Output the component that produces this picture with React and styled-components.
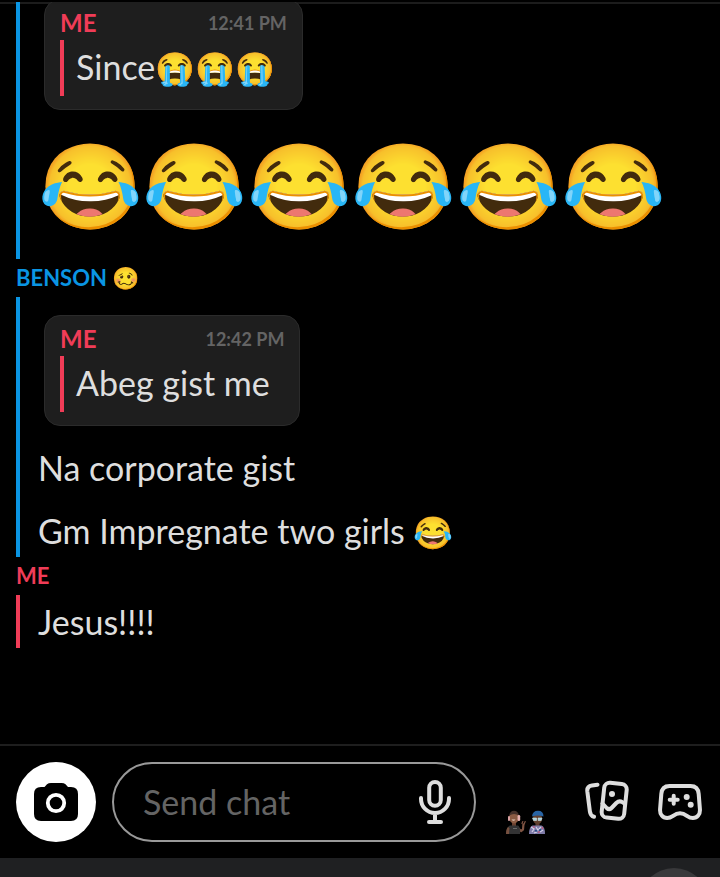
import React from 'react';
import styled, { createGlobalStyle } from 'styled-components';

const BLUE = '#0a95e3';
const RED = '#f03c57';

const GlobalStyle = createGlobalStyle`
  * { box-sizing: border-box; }
  body {
    margin: 0;
    background: #000;
    color: #dedede;
    font-family: Lato, "Noto Color Emoji", sans-serif;
  }
  button { padding: 0; border: 0; background: none; color: inherit; font: inherit; cursor: pointer; }
`;

const Screen = styled.div`
  display: flex;
  flex-direction: column;
  height: 100vh;
  padding-top: 2px;
`;

const Thread = styled.main`
  flex: 1;
  min-height: 0;
  display: flex;
  flex-direction: column;
  padding: 0 16px;
  overflow: hidden;
  box-shadow: inset 0 2px #1c1c1c;
`;

const Sender = styled.h2`
  margin: 0;
  height: 38px;
  line-height: 38px;
  font-size: 22px;
  font-weight: 700;
  white-space: pre;
  color: ${(p) => p.$color};
`;

const Group = styled.section`
  display: flex;
  flex-direction: column;
  align-items: flex-start;
  gap: 10px;
  padding-left: 18px;
  border-left: 4px solid ${(p) => p.$color};
`;

const Message = styled.p`
  margin: 0;
  font-size: 34px;
  line-height: 53px;
`;

const Emoji = styled.span`
  font-size: 32px;
  line-height: 1;
`;

const BigEmoji = styled.p`
  margin: 0;
  padding: 6px 0 22px;
  font-size: 84px;
  line-height: 106px;
  white-space: nowrap;
`;

const QuoteCard = styled.article`
  display: flex;
  flex-direction: column;
  margin: ${(p) => (p.$first ? '-3px' : '18px')} 0 5px 6px;
  padding: 0 15px 13px;
  border: 1px solid #2b2b2b;
  border-radius: 16px;
  background: #1e1e1e;
`;

const QuoteHead = styled.header`
  display: flex;
  align-items: center;
  justify-content: space-between;
  gap: 109px;
  height: 40px;
  padding-top: 6px;
`;

const QuoteName = styled.strong`
  color: ${RED};
  font-size: 24px;
  line-height: 24px;
`;

const QuoteTime = styled.time`
  color: #646464;
  font-size: 18px;
  font-weight: 700;
  line-height: 24px;
`;

const QuoteText = styled.p`
  margin: 0;
  padding: 0 12px 2px;
  border-left: 4px solid ${RED};
  font-size: 34px;
  line-height: 54px;
`;

const Composer = styled.form`
  display: flex;
  align-items: center;
  padding: 16px 18px 16px 16px;
  border-top: 2px solid #1e1e1e;
`;

const CameraButton = styled.button`
  display: grid;
  place-items: center;
  flex: none;
  width: 80px;
  height: 80px;
  border-radius: 50%;
  background: #fff;
`;

const Field = styled.div`
  flex: 1;
  min-width: 0;
  display: flex;
  align-items: center;
  height: 80px;
  margin: 0 30px 0 16px;
  padding: 0 17px 0 29px;
  border: 2px solid #999;
  border-radius: 40px;
`;

const ChatInput = styled.input`
  flex: 1;
  min-width: 0;
  padding: 0;
  border: 0;
  outline: 0;
  background: none;
  color: #dedede;
  font: 34px/48px Lato, sans-serif;
  &::placeholder { color: #646464; opacity: 1; }
`;

const Tools = styled.div`
  display: flex;
  align-items: center;
  gap: 29px;
`;

const IconButton = styled.button`
  display: flex;
  flex: none;
  align-items: center;
`;

const AvatarButton = styled(IconButton)`
  align-items: flex-end;
  width: 50px;
  height: 64px;
`;

const SystemBar = styled.footer`
  display: flex;
  justify-content: flex-end;
  height: 19px;
  padding: 10px 11px 0;
  overflow: hidden;
  background: #1f2022;
`;

const Knob = styled.span`
  flex: none;
  width: 70px;
  height: 70px;
  border-radius: 50%;
  background: #39393b;
`;

const stroke = { fill: 'none', stroke: '#dedede', strokeWidth: 4, strokeLinecap: 'round', strokeLinejoin: 'round' };

const CameraIcon = () => (
  <svg width="44" height="40" viewBox="0 0 44 40" aria-hidden="true">
    <path d="M7 5h3.5L13 2.200Q14.500 1 17 1h10.500q2.500 0 4 1.200L34 5h3q7 0 7 7v20q0 7-7 7H7q-7 0-7-7V12q0-7 7-7Z" fill="#000" />
    <circle cx="22" cy="21" r="8.200" fill="none" stroke="#fff" strokeWidth="3.800" />
  </svg>
);

const MicIcon = () => (
  <svg width="44" height="48" viewBox="0 0 44 48" aria-hidden="true">
    <g {...stroke}>
      <rect x="16.200" y="3.900" width="11.600" height="23.900" rx="5.800" />
      <path d="M8 20v1a14 14 0 0 0 28 0v-1M22 35v9M16 44h12" />
    </g>
  </svg>
);

const CardsIcon = () => (
  <svg width="44" height="44" viewBox="0 0 44 44" aria-hidden="true">
    <g {...stroke}>
      <path d="M12.500 4.700 7 5.400Q1.800 6.200 2.300 11.200L4.900 31.500Q5.500 36 9 36.800" />
      <rect x="17.900" y="3.300" width="22.600" height="35" rx="5.500" transform="rotate(6 29.200 20.800)" />
      <path d="m17.500 23.500 4.200 4.500q2.400 2.400 4.800 0l4.800-5q3-2.800 6-.8l1.500 1" />
    </g>
    <circle cx="27" cy="14" r="3" fill="#dedede" />
  </svg>
);

const GamepadIcon = () => (
  <svg width="44" height="44" viewBox="0 0 44 44" aria-hidden="true">
    <g {...stroke}>
      <path d="M11.500 6h21c5 0 7.800 3 8.200 8l1.200 15c.5 5.500-2.700 9-7 9-2.300 0-4-.8-6-2.200-2.500-1.800-4.400-2.500-6.900-2.500s-4.400.7-6.900 2.500c-2 1.400-3.700 2.200-6 2.200-4.300 0-7.500-3.500-7-9L3.300 14C3.700 9 6.500 6 11.500 6Z" />
      <path d="M15.700 15.700v8M11.700 19.700h8" />
    </g>
    <circle cx="28.700" cy="17" r="3" fill="#dedede" />
    <circle cx="32.700" cy="24.700" r="3" fill="#dedede" />
  </svg>
);

const FriendsIcon = () => (
  <svg width="40" height="24" viewBox="0 0 40 24" aria-hidden="true">
    <path d="M12 18l3 3 2-1.500.5-6" fill="none" stroke="#805544" strokeWidth="2.200" strokeLinejoin="round" />
    <path d="M16 13.500l.8-2M18.200 14l1-2.500" stroke="#805544" strokeWidth="1.200" strokeLinecap="round" />
    <path d="M6 12h4v5H6z" fill="#69402f" />
    <path d="M0 24q.5-7.500 4-8.500h8q2.500 1.500 2 8.500Z" fill="#333334" />
    <path d="M0 24q0-5 2-7l1.500 1-.5 6Z" fill="#76503f" />
    <ellipse cx="8" cy="7.500" rx="4.800" ry="6" fill="#8b5b43" />
    <path d="M3.200 5.500Q4 .8 8 .8t5 4.700Q8 2.500 3.200 5.500Z" fill="#443029" />
    <rect x="2" y="6" width="2" height="5" rx="1" fill="#d9a1a0" />
    <rect x="11.600" y="5" width="2.600" height="6" rx="1.300" fill="#e7b2b1" />
    <path d="M5.500 9.500h4q-2 2.500-4 0" fill="#e7cfc0" />
    <path d="M7 18.500h4" stroke="#777" strokeWidth=".8" />
    <path d="M29.500 12h4v5h-4z" fill="#5b3a30" />
    <path d="M23 24q0-7 3.500-8.500h9q3.500 1 3.500 8.500Z" fill="#7f7ca8" />
    <path d="M25 17l3 2-2 3M30 17l2 3 3-3M34 22l3-2M28 23l3-1" fill="none" stroke="#d5d1e7" strokeWidth="1.200" />
    <path d="M27 16.500l2 1M32 22.500l2-1M36 17l1 2" stroke="#c4567c" strokeWidth="1.200" />
    <path d="M29 20.500l2 .5M35 19.500l-2 1" stroke="#274c89" strokeWidth="1.500" />
    <ellipse cx="31.500" cy="8.500" rx="4.600" ry="5.500" fill="#61402f" />
    <path d="M26 6.500Q26.500.8 32 .8t5.500 5.700Q32 4.500 26 6.500Z" fill="#2864a4" />
    <path d="M26.500 8h4v2.500h-3zM32 8h4l-.8 2.500h-3z" fill="#a5d2df" stroke="#cce3e6" strokeWidth=".6" />
  </svg>
);

const Quote = ({ time, first, children }) => (
  <QuoteCard $first={first}>
    <QuoteHead>
      <QuoteName>ME</QuoteName>
      <QuoteTime>{time}</QuoteTime>
    </QuoteHead>
    <QuoteText>{children}</QuoteText>
  </QuoteCard>
);

export default function App() {
  return (
    <>
      <GlobalStyle />
      <Screen>
        <Thread>
          <Group $color={BLUE}>
            <Quote time="12:41 PM" first>
              Since<Emoji>😭😭😭</Emoji>
            </Quote>
            <BigEmoji>😂😂😂😂😂😂</BigEmoji>
          </Group>
          <Sender $color={BLUE}>BENSON 🥴</Sender>
          <Group $color={BLUE}>
            <Quote time="12:42 PM">Abeg gist me</Quote>
            <Message>Na corporate gist</Message>
            <Message>
              Gm Impregnate two girls <Emoji>😂</Emoji>
            </Message>
          </Group>
          <Sender $color={RED}>ME</Sender>
          <Group $color={RED}>
            <Message>Jesus!!!!</Message>
          </Group>
        </Thread>
        <Composer onSubmit={(e) => e.preventDefault()}>
          <CameraButton type="button" aria-label="Camera"><CameraIcon /></CameraButton>
          <Field>
            <ChatInput type="text" placeholder="Send chat" aria-label="Send chat" />
            <IconButton type="button" aria-label="Voice message"><MicIcon /></IconButton>
          </Field>
          <Tools>
            <AvatarButton type="button" aria-label="Stickers"><FriendsIcon /></AvatarButton>
            <IconButton type="button" aria-label="Gallery"><CardsIcon /></IconButton>
            <IconButton type="button" aria-label="Games"><GamepadIcon /></IconButton>
          </Tools>
        </Composer>
        <SystemBar><Knob /></SystemBar>
      </Screen>
    </>
  );
}
